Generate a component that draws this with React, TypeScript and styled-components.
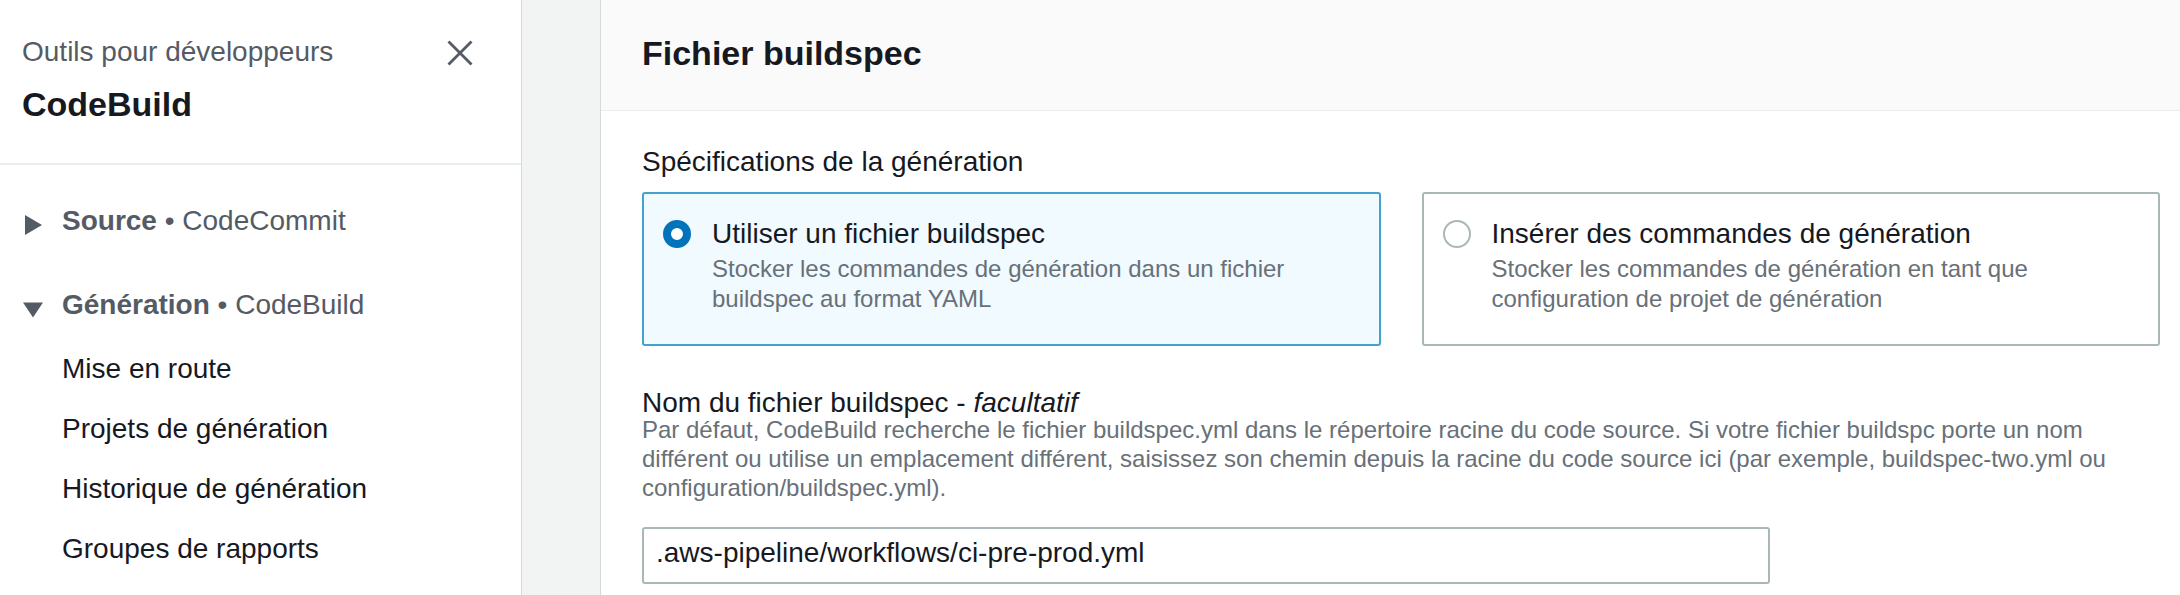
import React from 'react';
import styled, { createGlobalStyle } from 'styled-components';

const GlobalStyle = createGlobalStyle`
  html, body {
    margin: 0;
    padding: 0;
    height: 100%;
    overflow: hidden;
    background: #f2f3f3;
  }
  body {
    font-family: "Liberation Sans", Arial, sans-serif;
    color: #16191f;
  }
  *, *::before, *::after {
    box-sizing: border-box;
  }
`;

const Layout = styled.div`
  display: flex;
  width: 2180px;
  height: 595px;
`;

const Sidebar = styled.nav`
  flex: none;
  width: 522px;
  background: #ffffff;
  border-right: 1px solid #d5dbdb;
  display: flex;
  flex-direction: column;
`;

const SideHeader = styled.div`
  display: flex;
  justify-content: space-between;
  align-items: flex-start;
  padding: 32px 48px 37px 22px;
  border-bottom: 2px solid #eaeded;
`;

const SideTitles = styled.div`
  display: flex;
  flex-direction: column;
  gap: 10px;
`;

const SideOverline = styled.div`
  font-size: 28px;
  line-height: 40px;
  color: #545b64;
`;

const SideTitle = styled.div`
  font-size: 34px;
  line-height: 44px;
  font-weight: 700;
  color: #16191f;
`;

const CloseButton = styled.button`
  margin-top: 8px;
  padding: 0;
  border: 0;
  background: transparent;
  width: 26px;
  height: 26px;
  display: flex;
  color: #545b64;
  cursor: pointer;
`;

const NavList = styled.div`
  display: flex;
  flex-direction: column;
  padding-top: 36px;
`;

const SectionRow = styled.div<{ $spaced?: boolean }>`
  display: flex;
  align-items: center;
  height: 40px;
  padding-left: 23px;
  margin-top: ${(p) => (p.$spaced ? '44px' : '0')};
  font-size: 28px;
  line-height: 40px;
  color: #545b64;
`;

const Caret = styled.svg<{ $shift: number }>`
  flex: none;
  width: 20px;
  height: 20px;
  margin-right: 19px;
  margin-top: ${(p) => p.$shift}px;
  fill: #545b64;
`;

const SectionName = styled.span`
  font-weight: 700;
`;

const NavItem = styled.a<{ $first?: boolean }>`
  display: block;
  padding-left: 62px;
  margin-top: ${(p) => (p.$first ? '24px' : '20px')};
  font-size: 28px;
  line-height: 40px;
  color: #16191f;
  text-decoration: none;
`;

const Main = styled.main`
  flex: 1;
  min-width: 0;
  display: flex;
  padding-left: 78px;
  background: #f2f3f3;
`;

const Panel = styled.section`
  flex: 1;
  min-width: 0;
  display: flex;
  flex-direction: column;
  background: #ffffff;
  border-left: 1px solid #d5dbdb;
`;

const PanelHeader = styled.header`
  background: #fafafa;
  border-bottom: 1px solid #eaeded;
  padding: 31px 20px 35px 41px;
`;

const PanelTitle = styled.h2`
  margin: 0;
  font-size: 34px;
  line-height: 44px;
  font-weight: 700;
  color: #16191f;
`;

const PanelBody = styled.div`
  padding: 31px 20px 0 41px;
  display: flex;
  flex-direction: column;
`;

const GroupLabel = styled.div`
  font-size: 28px;
  line-height: 40px;
  color: #16191f;
`;

const Tiles = styled.div`
  margin-top: 10px;
  display: grid;
  grid-template-columns: 1fr 1fr;
  gap: 41px;
`;

const Tile = styled.label<{ $checked?: boolean }>`
  display: flex;
  align-items: flex-start;
  gap: 21px;
  height: 154px;
  padding: 20px 20px 30px 19px;
  border: 2px solid ${(p) => (p.$checked ? '#44a2cf' : '#aab7b8')};
  border-radius: 3px;
  background: ${(p) => (p.$checked ? '#f1faff' : '#ffffff')};
  cursor: pointer;
`;

const Radio = styled.span<{ $checked?: boolean }>`
  flex: none;
  width: 28px;
  height: 28px;
  margin-top: 6px;
  border-radius: 50%;
  background: #ffffff;
  border: ${(p) => (p.$checked ? '8px solid #0073bb' : '2px solid #aab7b8')};
`;

const TileText = styled.span`
  display: flex;
  flex-direction: column;
`;

const TileTitle = styled.span`
  font-size: 28px;
  line-height: 40px;
  color: #16191f;
`;

const TileDesc = styled.span`
  font-size: 24px;
  line-height: 30px;
  color: #687078;
`;

const Field = styled.div`
  margin-top: 45px;
  display: flex;
  flex-direction: column;
`;

const FieldLabel = styled.div`
  font-size: 28px;
  line-height: 24px;
  color: #16191f;

  em {
    font-style: italic;
  }
`;

const FieldDesc = styled.div`
  font-size: 24px;
  line-height: 29px;
  color: #687078;
`;

const TextInput = styled.input`
  margin-top: 25px;
  width: 1128px;
  height: 57px;
  padding: 0 12px 6px;
  border: 2px solid #aab7b8;
  border-radius: 3px;
  font-family: "Liberation Sans", Arial, sans-serif;
  font-size: 28px;
  color: #16191f;
  background: #ffffff;
  outline: none;
`;

const RightCaret = () => (
  <Caret $shift={8} viewBox="0 0 20 20" aria-hidden="true">
    <polygon points="2,0 19,10 2,20" />
  </Caret>
);

const DownCaret = () => (
  <Caret $shift={9} viewBox="0 0 20 20" aria-hidden="true">
    <polygon points="0,2.5 20,2.5 10,17.5" />
  </Caret>
);

export default function App() {
  return (
    <>
      <GlobalStyle />
      <Layout>
        <Sidebar>
          <SideHeader>
            <SideTitles>
              <SideOverline>Outils pour développeurs</SideOverline>
              <SideTitle>CodeBuild</SideTitle>
            </SideTitles>
            <CloseButton aria-label="Fermer">
              <svg width="26" height="26" viewBox="0 0 26 26" aria-hidden="true">
                <path d="M1.5 1.5 L24.5 24.5 M24.5 1.5 L1.5 24.5" stroke="currentColor" strokeWidth="2.8" fill="none" />
              </svg>
            </CloseButton>
          </SideHeader>
          <NavList>
            <SectionRow>
              <RightCaret />
              <span>
                <SectionName>Source</SectionName> • CodeCommit
              </span>
            </SectionRow>
            <SectionRow $spaced>
              <DownCaret />
              <span>
                <SectionName>Génération</SectionName> • CodeBuild
              </span>
            </SectionRow>
            <NavItem $first href="#">Mise en route</NavItem>
            <NavItem href="#">Projets de génération</NavItem>
            <NavItem href="#">Historique de génération</NavItem>
            <NavItem href="#">Groupes de rapports</NavItem>
          </NavList>
        </Sidebar>
        <Main>
          <Panel>
            <PanelHeader>
              <PanelTitle>Fichier buildspec</PanelTitle>
            </PanelHeader>
            <PanelBody>
              <GroupLabel>Spécifications de la génération</GroupLabel>
              <Tiles>
                <Tile $checked>
                  <Radio $checked />
                  <TileText>
                    <TileTitle>Utiliser un fichier buildspec</TileTitle>
                    <TileDesc>
                      Stocker les commandes de génération dans un fichier buildspec au format YAML
                    </TileDesc>
                  </TileText>
                </Tile>
                <Tile>
                  <Radio />
                  <TileText>
                    <TileTitle>Insérer des commandes de génération</TileTitle>
                    <TileDesc>
                      Stocker les commandes de génération en tant que configuration de projet de génération
                    </TileDesc>
                  </TileText>
                </Tile>
              </Tiles>
              <Field>
                <FieldLabel>
                  Nom du fichier buildspec - <em>facultatif</em>
                </FieldLabel>
                <FieldDesc>
                  Par défaut, CodeBuild recherche le fichier buildspec.yml dans le répertoire racine du code source. Si votre fichier buildspc porte un nom différent ou utilise un emplacement différent, saisissez son chemin depuis la racine du code source ici (par exemple, buildspec-two.yml ou configuration/buildspec.yml).
                </FieldDesc>
                <TextInput readOnly value=".aws-pipeline/workflows/ci-pre-prod.yml" />
              </Field>
            </PanelBody>
          </Panel>
        </Main>
      </Layout>
    </>
  );
}
